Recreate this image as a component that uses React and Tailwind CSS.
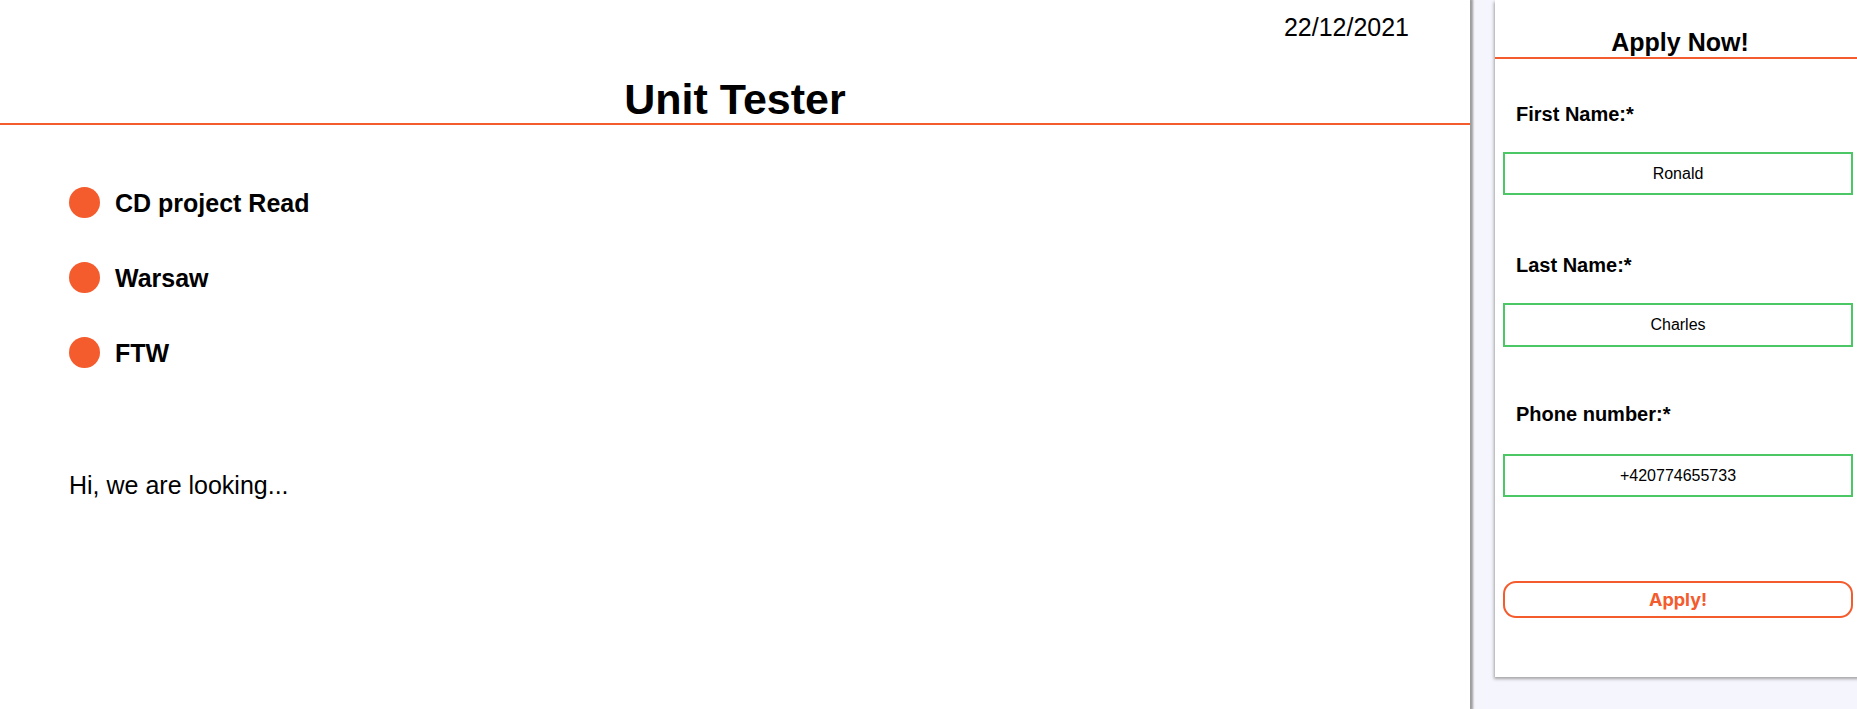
import { useState } from "react";

const font = { fontFamily: '"Liberation Sans", Arial, sans-serif' };

export default function App() {
  const [first, setFirst] = useState("Ronald");
  const [last, setLast] = useState("Charles");
  const [phone, setPhone] = useState("+420774655733");

  const points = ["CD project Read", "Warsaw", "FTW"];

  return (
    <div
      className="flex w-full min-h-[709px] bg-[#f5f5fe] overflow-hidden text-black"
      style={font}
    >
      {/* job detail */}
      <div className="w-[1470px] shrink-0 bg-white min-h-[709px] relative z-10 shadow-[2px_0_2px_1px_#9d9d9d]">
        <div className="pt-[13px] pr-[61px] text-right text-[25px] leading-[28px]">
          22/12/2021
        </div>
        <h1 className="mt-[34px] text-center text-[43px] leading-[48px] font-bold">
          Unit Tester
        </h1>
        <div className="h-[2px] bg-[#f45b2d]" />

        <ul className="pl-[69px] mt-[62px] flex flex-col gap-[44px]">
          {points.map((p) => (
            <li key={p} className="flex items-center gap-[15px] h-[31px]">
              <span className="w-[31px] h-[31px] rounded-full bg-[#f45b2d] shrink-0" />
              <span className="text-[25px] font-bold leading-[28px]">{p}</span>
            </li>
          ))}
        </ul>

        <p className="pl-[69px] mt-[103px] text-[25px] leading-[28px]">
          Hi, we are looking...
        </p>
      </div>

      {/* apply form */}
      <div className="flex-1 pl-[25px]">
        <div className="bg-white w-[370px] shadow-[-1px_2px_3px_#a3a3a3] px-2 pt-[28px] pb-[59px]">
          <h2 className="text-center text-[25px] leading-[29px] font-bold -mx-2 border-b-2 border-[#f45b2d]">
            Apply Now!
          </h2>

          <label className="block ml-[13px] mt-[43px] text-[20px] leading-[24px] font-bold">
            First Name:*
          </label>
          <input
            value={first}
            onChange={(e) => setFirst(e.target.value)}
            className="block mt-[26px] w-[350px] h-[43px] border-2 border-[#4cc765] text-center text-[16px] outline-none"
            style={font}
          />

          <label className="block ml-[13px] mt-[58px] text-[20px] leading-[24px] font-bold">
            Last Name:*
          </label>
          <input
            value={last}
            onChange={(e) => setLast(e.target.value)}
            className="block mt-[26px] w-[350px] h-[44px] border-2 border-[#4cc765] text-center text-[16px] outline-none"
            style={font}
          />

          <label className="block ml-[13px] mt-[55px] text-[20px] leading-[24px] font-bold">
            Phone number:*
          </label>
          <input
            value={phone}
            onChange={(e) => setPhone(e.target.value)}
            className="block mt-[28px] w-[350px] h-[43px] border-2 border-[#4cc765] text-center text-[16px] outline-none"
            style={font}
          />

          <button
            className="block mt-[84px] w-[350px] h-[37px] border-2 border-[#f45b2d] rounded-[13px] text-[#f45b2d] text-[18px] font-bold"
            style={{ fontFamily: 'Inter, "Open Sans", sans-serif' }}
          >
            Apply!
          </button>
        </div>
      </div>
    </div>
  );
}
